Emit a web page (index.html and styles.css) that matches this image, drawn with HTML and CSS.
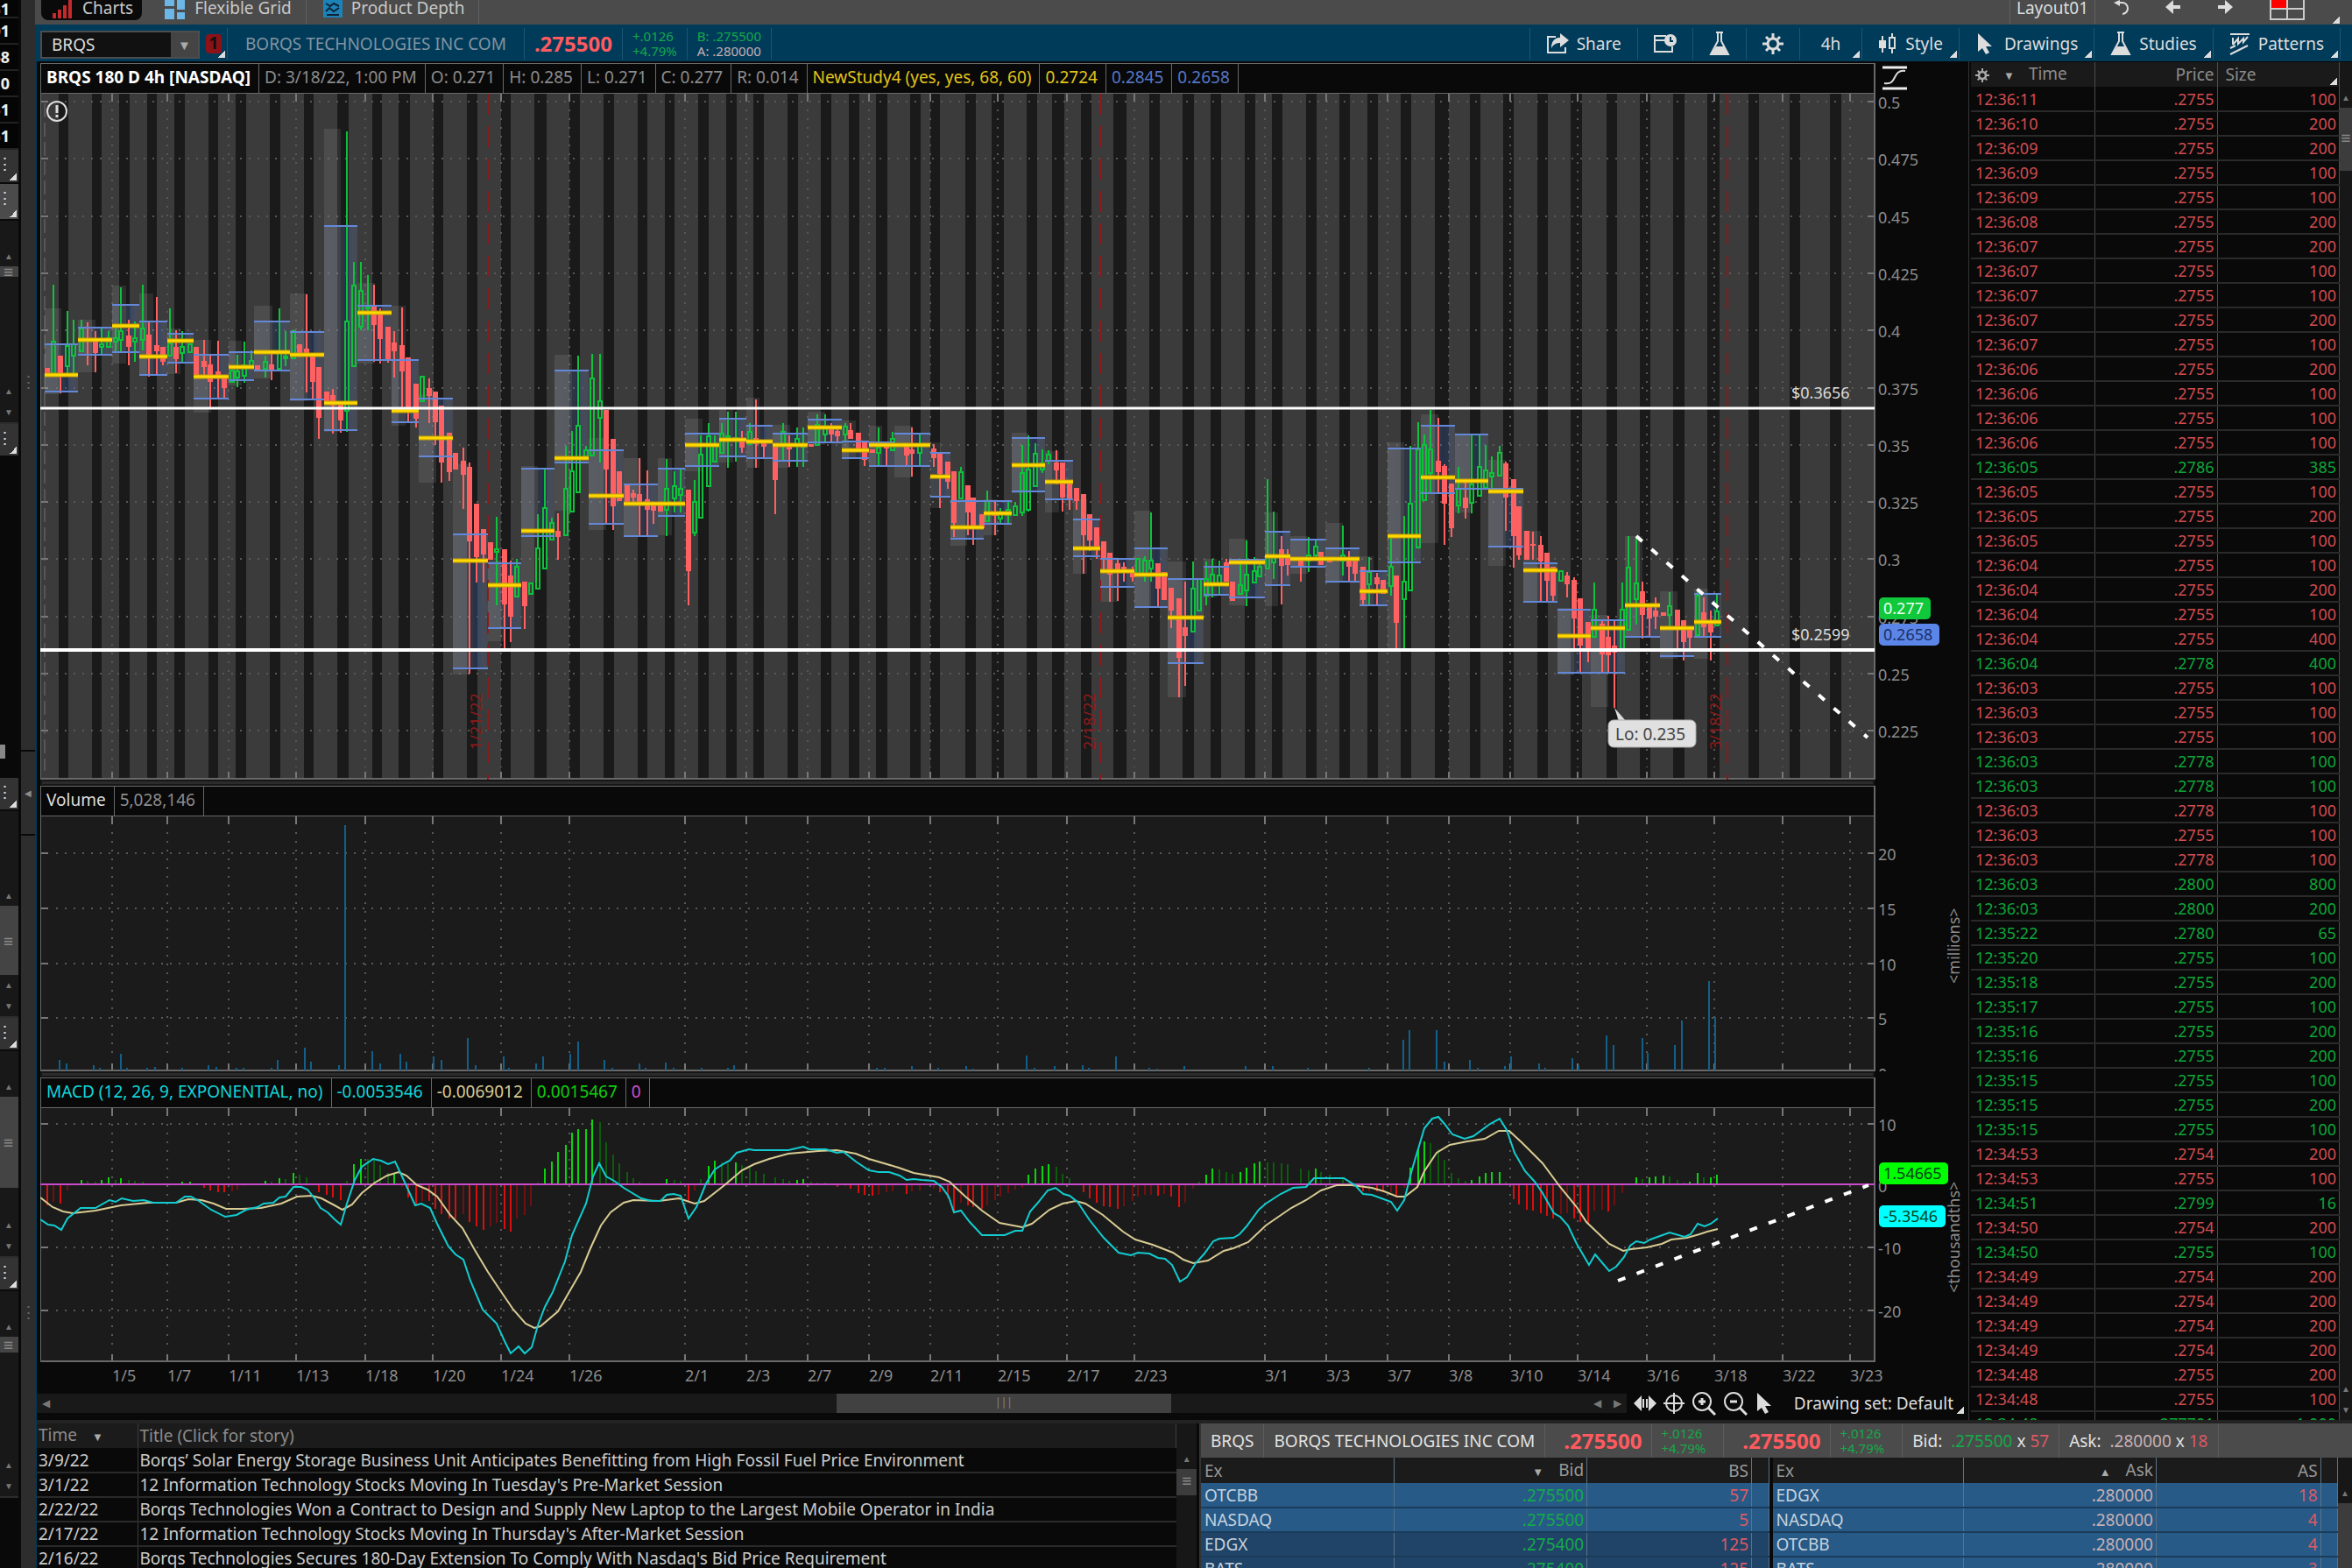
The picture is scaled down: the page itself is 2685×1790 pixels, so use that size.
FILE: index.html
```html
<!DOCTYPE html>
<html lang="en">
  <head>
    <meta charset="UTF-8" />
    <meta name="viewport" content="width=device-width, initial-scale=1.0" />
    <title>BRQS Charts</title>
    <link rel="stylesheet" href="styles.css">
  </head>

  <body>
    <div class="app">
      <div class="rail">
        <div class="cell">31</div>
        <div class="cell">01</div>
        <div class="cell">68</div>
        <div class="cell">0</div>
        <div class="cell">51</div>
        <div class="cell">51</div>
        <div class="tab corner">⋮</div>
        <div class="tab light corner">⋮</div>
        <div class="up">▲</div>
        <div class="thumb">≡</div>
        <div class="updown"><span>▲</span><span>▼</span></div>
        <div class="tab corner">⋮</div>
        <div class="dark"><i class="knob"></i></div>
        <div class="tab corner">⋮</div>
        <div class="up">▲</div>
        <div class="thumb">≡</div>
        <div class="updown"><span>▲</span><span>▼</span></div>
        <div class="tab corner">⋮</div>
        <div class="up">▲</div>
        <div class="thumb">≡</div>
        <div class="updown"><span>▲</span><span>▼</span></div>
        <div class="tab corner">⋮</div>
        <div class="up">▲</div>
        <div class="thumb">≡</div>
        <div class="updown"><span>▲</span><span>▼</span></div>
        <div class="dark"></div>
      </div>
      <div class="splitter">
        <div class="grip">⋮</div>
        <button class="collapse" aria-label="Collapse">◀</button>
        <div class="grip">⋮</div>
      </div>

      <div class="main">
        <nav class="tabs">
          <a href="#" class="active">
            <svg width="24" height="22" viewBox="0 0 24 22" fill="#c4292c"><path d="M0 15h4v6H0zM6 11h4v10H6zM12 6h4v15h-4zM18 0h4v21h-4z"/></svg>
            Charts
          </a>
          <a href="#">
            <svg width="24" height="22" viewBox="0 0 24 22" fill="#6db7e6"><path d="M0 0h11v7H0zM0 10h11v12H0zM14 0h9v11h-9zM14 14h9v8h-9z"/></svg>
            Flexible Grid
          </a>
          <a href="#">
            <svg width="22" height="22" viewBox="0 0 22 22"><path fill="#1c83b8" d="M0 0h22v20H0z"/><path d="M3 4l5 3 4-3 6 3M3 13l4-4 5 4 6-4M4 17h14" fill="none" stroke="#123" stroke-width="2"/></svg>
            Product Depth
          </a>
          <div class="layout">
            <button class="name">Layout01</button>
            <button aria-label="Undo"><svg width="20" height="20" viewBox="0 0 20 20"><path d="M5 3h5a6 6 0 0 1 1 13" fill="none" stroke="#ddd" stroke-width="2"/><path d="M8 0v7L1 3z" fill="#ddd"/></svg></button>
            <button aria-label="Back"><svg width="18" height="16" viewBox="0 0 18 16"><path d="M9 0v6h8v4H9v6L0 8z" fill="#ddd"/></svg></button>
            <button aria-label="Forward"><svg width="18" height="16" viewBox="0 0 18 16"><path d="M9 0v6H1v4h8v6l9-8z" fill="#ddd"/></svg></button>
            <button class="grids corner" aria-label="Grid"><svg width="40" height="24" viewBox="0 0 40 24"><path fill="#f00" d="M0 0h20v10H0z"/><path d="M1 0v22h38V0M20 0v22M1 10h38" fill="none" stroke="#ccc" stroke-width="2"/></svg></button>
          </div>
        </nav>

        <div class="toolbar">
          <div class="symbol">
            <input type="text" value="BRQS" aria-label="Symbol" />
            <button aria-label="Symbols">▼</button>
          </div>
          <button class="link corner" aria-label="Link"><b>1</b></button>
          <div class="company">BORQS TECHNOLOGIES INC COM</div>
          <div class="last">.275500</div>
          <div class="change">+.0126<br />+4.79%</div>
          <div class="change">B: .275500<br /><span class="ask">A: .280000</span></div>
          <div class="actions">
            <button><svg width="26" height="24" viewBox="0 0 26 24"><path d="M11 4H2v18h20v-6" fill="none" stroke="#ddd" stroke-width="2"/><path d="M16 0v5C9 5 6 10 6 17c2-4 5-6 10-6v5l10-8z" fill="#ddd"/></svg>Share</button>
            <button aria-label="Events"><svg width="26" height="24" viewBox="0 0 26 24"><path d="M14 3H1v18h20v-6M1 8h13" fill="none" stroke="#ddd" stroke-width="2"/><circle cx="19" cy="8" r="7" fill="#ddd"/><path d="M19 4v5h3" stroke="#003b5a" fill="none" stroke-width="2"/></svg></button>
            <button aria-label="Lab"><svg width="24" height="28" viewBox="0 0 24 28"><path d="M8 1h8M10 1v10L2 26h20L14 11V1" fill="none" stroke="#ddd" stroke-width="2"/><path d="M8 17h9l5 9H2z" fill="#ddd"/></svg></button>
            <button aria-label="Settings"><svg width="24" height="24" viewBox="0 0 24 24"><circle cx="12" cy="12" r="6" fill="none" stroke="#ddd" stroke-width="3"/><path d="M12 0v5M12 19v5M0 12h5M19 12h5M4 4l3 3M17 17l3 3M20 4l-3 3M7 17l-3 3" stroke="#ddd" stroke-width="3"/></svg></button>
            <button class="corner period">4h</button>
            <button class="corner"><svg width="22" height="24" viewBox="0 0 22 24"><path d="M5 3v19M16 0v5M16 17v6" stroke="#ddd" stroke-width="2"/><path fill="#ddd" d="M1 8h8v9H1z"/><path d="M13 5h6v12h-6z" fill="none" stroke="#ddd" stroke-width="2"/></svg>Style</button>
            <button class="corner"><svg width="24" height="24" viewBox="0 0 24 24"><path d="M3 0v21l5-4 4 7 4-2-4-7h7z" fill="#ddd"/></svg>Drawings</button>
            <button class="corner"><svg width="24" height="28" viewBox="0 0 24 28"><path d="M8 1h8M10 1v10L2 26h20L14 11V1" fill="none" stroke="#ddd" stroke-width="2"/><path d="M8 17h9l5 9H2z" fill="#ddd"/></svg>Studies</button>
            <button class="corner last-action"><svg width="24" height="26" viewBox="0 0 24 26"><path d="M1 2h22M4 14V6M4 14l6-7v6l6-6v4l5-6M1 25l20-10M1 18l6-3" fill="none" stroke="#ddd" stroke-width="2"/></svg>Patterns</button>
          </div>
        </div>

        <div class="work">
          <div class="charts">
            <div class="study">
              <span class="title">BRQS 180 D 4h [NASDAQ]</span>
              <span>D: 3/18/22, 1:00 PM</span>
              <span>O: 0.271</span>
              <span>H: 0.285</span>
              <span>L: 0.271</span>
              <span>C: 0.277</span>
              <span>R: 0.014</span>
              <span class="yellow">NewStudy4 (yes, yes, 68, 60)</span>
              <span class="yellow">0.2724</span>
              <span class="blue">0.2845</span>
              <span class="blue">0.2658</span>
              <svg class="fit" width="28" height="30" viewBox="0 0 28 30"><path d="M0 4h28M0 28h28" stroke="#eee" stroke-width="3"/><path d="M2 22c16 3 8-16 24-14" fill="none" stroke="#ddd" stroke-width="2"/></svg>
            </div>
            <svg id="price" class="chart" viewBox="46 107 2201 783"></svg>
            <div class="divider"></div>
            <div class="study">
              <span class="white">Volume</span>
              <span>5,028,146</span>
            </div>
            <svg id="volume" class="chart" viewBox="46 932 2201 291"></svg>
            <div class="divider"></div>
            <div class="study">
              <span class="cyan">MACD (12, 26, 9, EXPONENTIAL, no)</span>
              <span class="cyan">-0.0053546</span>
              <span class="tan">-0.0069012</span>
              <span class="green">0.0015467</span>
              <span class="magenta">0</span>
            </div>
            <svg id="macd" class="chart" viewBox="46 1265 2201 325"></svg>
            <div class="bottom-bar">
              <div class="scroll">
                <span>◀</span>
                <div class="track"><div class="handle">|||</div></div>
                <span>◀</span><span>▶</span>
              </div>
              <button aria-label="Expand"><svg width="26" height="20" viewBox="0 0 26 20"><path d="M9 1v18L0 10zM17 1v18l9-9z" fill="#ddd"/><path d="M11 5v10M15 5v10" stroke="#ddd" stroke-width="2"/></svg></button>
              <button aria-label="Crosshair"><svg width="24" height="24" viewBox="0 0 24 24"><circle cx="12" cy="12" r="9" fill="none" stroke="#ddd" stroke-width="2"/><path d="M12 0v24M0 12h24" stroke="#ddd" stroke-width="2"/></svg></button>
              <button aria-label="Zoom in"><svg width="28" height="28" viewBox="0 0 28 28"><circle cx="12" cy="12" r="10" fill="none" stroke="#ddd" stroke-width="2"/><path d="M19 19l8 8M12 8v8M8 12h8" stroke="#ddd" stroke-width="3"/></svg></button>
              <button aria-label="Zoom out"><svg width="28" height="28" viewBox="0 0 28 28"><circle cx="12" cy="12" r="10" fill="none" stroke="#ddd" stroke-width="2"/><path d="M19 19l8 8M8 12h8" stroke="#ddd" stroke-width="3"/></svg></button>
              <button aria-label="Pointer"><svg width="24" height="24" viewBox="0 0 24 24"><path d="M3 0v21l5-4 4 7 4-2-4-7h7z" fill="#ddd"/></svg></button>
              <button class="set corner">Drawing set: Default</button>
            </div>
          </div>

          <div class="sales">
            <table>
              <colgroup><col class="c1" /><col class="c2" /><col class="c3" /></colgroup>
              <thead>
                <tr>
                  <th class="l"><svg width="16" height="16" viewBox="0 0 24 24"><circle cx="12" cy="12" r="6" fill="none" stroke="#aaa" stroke-width="4"/><path d="M12 0v5M12 19v5M0 12h5M19 12h5M4 4l3 3M17 17l3 3M20 4l-3 3M7 17l-3 3" stroke="#aaa" stroke-width="3"/></svg><i class="sort">▼</i>Time</th>
                  <th>Price</th>
                  <th class="l corner">Size</th>
                </tr>
              </thead>
              <tbody id="trades"></tbody>
            </table>
            <div class="vscroll">
              <span>▲</span>
              <div class="vthumb">≡</div>
              <span class="push">▲</span><span>▼</span>
            </div>
          </div>
        </div>

        <div class="lower">
          <div class="news">
            <table>
              <colgroup><col class="date" /><col /></colgroup>
              <thead>
                <tr><th>Time <i class="sort">▼</i></th><th>Title (Click for story)</th></tr>
              </thead>
              <tbody>
                <tr><td>3/9/22</td><td>Borqs’ Solar Energy Storage Business Unit Anticipates Benefitting from High Fossil Fuel Price Environment</td></tr>
                <tr><td>3/1/22</td><td>12 Information Technology Stocks Moving In Tuesday's Pre-Market Session</td></tr>
                <tr><td>2/22/22</td><td>Borqs Technologies Won a Contract to Design and Supply New Laptop to the Largest Mobile Operator in India</td></tr>
                <tr><td>2/17/22</td><td>12 Information Technology Stocks Moving In Thursday's After-Market Session</td></tr>
                <tr><td>2/16/22</td><td>Borqs Technologies Secures 180-Day Extension To Comply With Nasdaq's Bid Price Requirement</td></tr>
              </tbody>
            </table>
            <div class="vscroll">
              <span>▲</span>
              <div class="vthumb short">≡</div>
            </div>
          </div>

          <div class="depth">
            <div class="quote">
              <div>BRQS</div>
              <div>BORQS TECHNOLOGIES INC COM</div>
              <div class="last">.275500</div>
              <div class="change">+.0126<br />+4.79%</div>
              <div class="last">.275500</div>
              <div class="change">+.0126<br />+4.79%</div>
              <div>Bid: &nbsp;<span class="bid">.275500</span> x <span class="red">57</span></div>
              <div>Ask: &nbsp;<span class="ask">.280000</span> x <span class="red">18</span></div>
            </div>
            <div class="books">
              <table class="book">
                <colgroup><col class="ex" /><col class="px" /><col class="sz" /><col /></colgroup>
                <thead><tr><th class="l">Ex</th><th><i class="sort">▼</i> Bid</th><th>BS</th><th></th></tr></thead>
                <tbody>
                  <tr><td class="l">OTCBB</td><td class="bid">.275500</td><td class="red">57</td><td></td></tr>
                  <tr><td class="l">NASDAQ</td><td class="bid">.275500</td><td class="red">5</td><td></td></tr>
                  <tr class="deep"><td class="l">EDGX</td><td class="bid">.275400</td><td class="red">125</td><td></td></tr>
                  <tr class="deep"><td class="l">BATS</td><td class="bid">.275400</td><td class="red">125</td><td></td></tr>
                </tbody>
              </table>
              <table class="book">
                <colgroup><col class="ex" /><col class="px" /><col class="sz" /><col /></colgroup>
                <thead><tr><th class="l">Ex</th><th><i class="sort">▲</i> Ask</th><th>AS</th><th></th></tr></thead>
                <tbody>
                  <tr><td class="l">EDGX</td><td class="ask">.280000</td><td class="red">18</td><td></td></tr>
                  <tr><td class="l">NASDAQ</td><td class="ask">.280000</td><td class="red">4</td><td></td></tr>
                  <tr><td class="l">OTCBB</td><td class="ask">.280000</td><td class="red">4</td><td></td></tr>
                  <tr><td class="l">BATS</td><td class="ask">.280000</td><td class="red">3</td><td></td></tr>
                </tbody>
              </table>
              <div class="vscroll">
                <span>▲</span>
                <div class="vthumb long"></div>
              </div>
            </div>
          </div>
        </div>
      </div>
    </div>
    <script src="script.js"></script>
  </body>
</html>
```

FILE: styles.css
```css
* {
  box-sizing: border-box;
}

body {
  margin: 0;
  height: 100vh;
  overflow: hidden;
  background-color: #090909;
  color: #8c8c8c;
  font-family: "Noto Sans", "Open Sans", sans-serif;
  font-size: 19px;
  line-height: 24px;
}

button,
input {
  font: inherit;
  color: inherit;
  background: none;
  border: 0;
  padding: 0;
  margin: 0;
}

a {
  color: inherit;
  text-decoration: none;
}

table {
  border-collapse: collapse;
  table-layout: fixed;
  width: 100%;
}

th,
td {
  padding: 0;
  font-weight: normal;
  white-space: nowrap;
  overflow: hidden;
}

.app {
  display: grid;
  grid-template-columns: 23px 17px minmax(0, 1fr);
  grid-template-rows: 100vh;
  overflow: hidden;
}

/* small white triangle in the lower right of a menu button */
.corner {
  background-image: linear-gradient(135deg, transparent 50%, #ddd 50%);
  background-size: 8px 8px;
  background-repeat: no-repeat;
  background-position: right 2px bottom 2px;
}

/* left rail */
.rail {
  display: grid;
  grid-template-columns: 21px;
  grid-template-rows:
    21px repeat(5, 30px) 39px 42px 52px 12px 168px 38px 366px 38px 108px
    79px 49px 38px 52px 104px 80px 38px 52px 18px 166px 1fr;
  background-color: #181818;
  border-right: 2px solid #0a0a0a;
  color: #777;
  overflow: hidden;
}

.cell {
  display: flex;
  justify-content: flex-end;
  align-items: center;
  padding-right: 10px;
  background-color: #050505;
  border-bottom: 2px solid #222;
  color: #eee;
  font-weight: bold;
  font-size: 18px;
}

.rail .tab {
  background-color: #333;
  border-bottom: 2px solid #0a0a0a;
  color: #ddd;
  line-height: 32px;
  text-indent: -4px;
}

.rail .light {
  background-color: #4b4b4b;
}

.up,
.updown,
.vscroll span {
  font-size: 10px;
  color: #777;
}

.up {
  display: flex;
  align-items: flex-end;
  padding-left: 5px;
}

.updown {
  display: flex;
  flex-direction: column;
  justify-content: flex-end;
  padding-left: 5px;
  border-bottom: 2px solid #2c2c2c;
}

.thumb {
  display: flex;
  align-items: center;
  padding-left: 4px;
  background-color: #444;
  color: #888;
}

.dark {
  display: flex;
  align-items: flex-end;
  padding-bottom: 22px;
  background-color: #090909;
}

.knob {
  width: 6px;
  height: 16px;
  background-color: #888;
}

.splitter {
  display: flex;
  flex-direction: column;
  justify-content: space-between;
  align-items: center;
  padding: 424px 0 280px;
  background-color: #2d2d2d;
  border-left: 1px solid #090909;
}

.grip {
  color: #666;
}

.collapse {
  width: 100%;
  height: 98px;
  margin-bottom: 124px;
  border-top: 2px solid #090909;
  border-bottom: 2px solid #090909;
  font-size: 10px;
}

.main {
  display: flex;
  flex-direction: column;
  border-left: 2px solid #003b5a;
}

/* tabs on top */
.tabs {
  display: flex;
  align-items: flex-start;
  flex: none;
  height: 28px;
  margin-left: -2px;
  padding-left: 7px;
  background-color: #4b4b4b;
  color: #c8c8c8;
  line-height: 19px;
}

.tabs a {
  display: flex;
  gap: 10px;
  height: 28px;
  padding: 0 16px 0 19px;
  border-right: 1px solid #606060;
}

.tabs .active {
  height: 23px;
  margin-right: 7px;
  padding: 0 10px 0 13px;
  background-color: #0a0a0a;
  border: 0;
  border-radius: 0 0 8px 8px;
}

.layout {
  display: flex;
  margin-left: auto;
  height: 28px;
}

.layout button {
  display: flex;
  width: 59px;
  justify-content: center;
}

.layout .name {
  width: 98px;
  border-left: 1px solid #606060;
  border-right: 1px solid #606060;
  color: #ddd;
}

.layout .grids {
  width: 116px;
  padding-right: 32px;
  background-position: right 14px bottom 1px;
}

/* blue toolbar */
.toolbar {
  display: flex;
  align-items: stretch;
  flex: none;
  height: 42px;
  margin-left: -2px;
  padding: 4px 13px 2px 6px;
  background-color: #003b5a;
}

.symbol {
  display: flex;
  width: 182px;
  height: 32px;
  margin-top: 3px;
  background-color: #111;
  border: 2px solid #4d4d4d;
}

.symbol input {
  width: 147px;
  padding-left: 11px;
  color: #ddd;
}

.symbol button {
  width: 31px;
  background-color: #444;
  color: #aaa;
  font-size: 15px;
}

.link {
  width: 32px;
  padding-left: 7px;
  border-right: 1px solid #1c5674;
  text-align: left;
  line-height: 20px;
}

.link b {
  display: block;
  width: 18px;
  height: 22px;
  background-color: #8d1218;
  border-radius: 4px;
  color: #111;
  text-align: center;
}

.company,
.toolbar .last,
.toolbar .change {
  display: flex;
  align-items: center;
  border-right: 1px solid #1c5674;
}

.company {
  padding: 0 20px;
  color: #8294a0;
}

.last {
  padding: 0 11px;
  color: #ff5a5f;
  font-size: 24px;
  font-weight: bold;
}

.toolbar .change,
.quote div.change {
  display: block;
  padding: 1px 11px;
  color: #16a84a;
  font-size: 15px;
  line-height: 17px;
}

.ask {
  color: #c7b0b4;
}

.actions {
  display: flex;
  margin-left: auto;
  color: #ddd;
}

.actions button {
  display: flex;
  align-items: center;
  gap: 9px;
  padding: 0 18px;
  border-left: 1px solid #1c5674;
}

.actions .period {
  padding: 0 24px;
}

.actions .last-action {
  border-right: 1px solid #1c5674;
}

/* charts and time and sales */
.work {
  display: grid;
  grid-template-columns: minmax(0, 1fr) 438px;
  flex: none;
  border-bottom: 4px solid #232323;
}

.charts {
  padding: 2px 0 0 4px;
}

.study {
  display: flex;
  position: relative;
  height: 35px;
  margin-right: 106px;
  background-color: #090909;
  border: 1px solid #686868;
  border-right-width: 2px;
  line-height: 31px;
}

.study span {
  padding: 0 9px 0 6px;
  border-right: 1px solid #686868;
}

.study .title {
  color: #fff;
  font-weight: bold;
}

.white {
  color: #ddd;
}

.yellow {
  color: #e2c41a;
}

.blue {
  color: #5577c6;
}

.cyan {
  color: #12d6da;
}

.tan {
  color: #d8cb93;
}

.green {
  color: #10cf10;
}

.magenta {
  color: #cf4fd0;
}

.fit {
  position: absolute;
  left: 100%;
  margin-left: 10px;
}

.chart {
  display: block;
  width: 100%;
  height: auto;
}

.chart text {
  fill: #8c8c8c;
  font-size: 18px;
}

.chart .note {
  fill: #ddd;
}

.chart .expiry {
  fill: #8d1a1a;
}

.chart .on-green {
  fill: #f0fff0;
}

.chart .on-blue {
  fill: #1b2f66;
}

.chart .on-bright {
  fill: #06401c;
}

.chart .callout {
  fill: #444;
  font-size: 19px;
}

.divider {
  height: 7px;
  margin-right: 107px;
  background-color: #2b2b2b;
  border: 2px solid #161616;
}

.bottom-bar {
  display: flex;
  align-items: center;
  gap: 8px;
  height: 31px;
  margin-left: -4px;
  padding-bottom: 7px;
}

.bottom-bar button {
  display: flex;
  height: 28px;
  align-items: center;
}

.scroll {
  display: flex;
  flex: 1;
  align-items: center;
  gap: 14px;
  height: 22px;
  padding: 0 6px;
  background-color: #191919;
  color: #777;
  font-size: 12px;
}

.track {
  flex: 1;
}

.handle {
  width: 22%;
  height: 22px;
  margin-left: 51%;
  background-color: #414141;
  color: #888;
  text-align: center;
  line-height: 20px;
}

.bottom-bar .set {
  margin-left: 13px;
  padding-right: 14px;
  margin-right: 3px;
  color: #ddd;
}

/* the list is cut off at the height of the charts */
.sales {
  display: flex;
  contain: size;
  overflow: hidden;
  padding: 1px 0 0 2px;
  border-left: 1px solid #333;
}

.sales table {
  width: 421px;
  height: 1px;
}

.sales .c1 {
  width: 141px;
}

.sales .c2 {
  width: 140px;
}

.sales tr,
.news tr {
  height: 28px;
}

.sales th,
.sales td {
  height: 28px;
  padding: 0 3px 0 5px;
  border-right: 1px solid #4c4c4c;
  text-align: right;
}

.sales td {
  border-bottom: 2px solid #2a2a2a;
  font-size: 18px;
}

.sales th {
  background-color: #1a1a1a;
}

.sales td.l,
.sales th.l {
  text-align: left;
}

.sales th svg {
  vertical-align: middle;
}

.sales th.corner {
  padding-left: 9px;
}

.sort {
  font-size: 13px;
  font-style: normal;
  color: #aaa;
  margin: 0 12px;
}

.sales .sort {
  margin: 0 16px;
}

.down td {
  color: #d24c50;
}

.rise td {
  color: #0da638;
}

.vscroll {
  display: flex;
  flex-direction: column;
  align-items: center;
  width: 23px;
  padding-top: 28px;
  background-color: #171717;
  overflow: hidden;
}

.sales .vscroll {
  width: 14px;
  margin-left: auto;
}

.vthumb {
  flex: none;
  width: 100%;
  height: 72px;
  background-color: #3c3c3c;
  color: #888;
  text-align: center;
  line-height: 68px;
}

.vthumb.short {
  height: 30px;
  line-height: 26px;
}

.vthumb.long {
  height: 200px;
}

.push {
  margin-top: auto;
}

/* news and market depth */
.lower {
  display: grid;
  grid-template-columns: minmax(0, 1327px) minmax(0, 1fr);
  flex: 1;
  min-height: 0;
  overflow: hidden;
}

.news {
  display: flex;
  padding-right: 3px;
}

.news table {
  height: 1px;
}

.news .date {
  width: 115px;
}

.news th,
.news td {
  padding-left: 2px;
  text-align: left;
}

.news th {
  background-color: #1b1b1b;
  border-right: 1px solid #3c3c3c;
}

.news td {
  color: #ccc;
  border-bottom: 2px solid #2a2a2a;
}

.news td:first-child {
  border-right: 1px solid #3c3c3c;
}

.depth {
  border-left: 2px solid #333;
  overflow: hidden;
}

.quote {
  display: flex;
  height: 39px;
  background-color: #4b4b4b;
  color: #e2e2e2;
}

.quote div {
  display: flex;
  align-items: center;
  padding: 0 11px;
  border-right: 1px solid #5c5c5c;
  white-space: pre;
}

.quote div.last {
  padding-left: 21px;
  color: #ff5a5f;
}

.quote div.change {
  padding: 3px 20px 0 10px;
}

.bid {
  color: #16a84a;
}

.red {
  color: #dc5a66;
}

.books {
  display: flex;
  align-items: flex-start;
}

.book .ex {
  width: 34%;
}

.book .px {
  width: 34%;
}

.book .sz {
  width: 29%;
}

.book th {
  height: 29px;
  background-color: #1b1b1b;
  color: #999;
}

.book th,
.book td {
  padding: 0 3px 0 4px;
  border-right: 1px solid #5a7388;
  text-align: right;
}

.book td {
  height: 28px;
  background-color: #275a87;
  border-bottom: 2px solid #1b3c5a;
}

.book .deep td {
  background-color: #204467;
}

.book td.l {
  color: #c6d2de;
}

.book .l {
  text-align: left;
}

.book + .book {
  border-left: 4px solid #090909;
}

.books .vscroll {
  width: 16px;
  flex: none;
}
```

FILE: script.js
```js
// every bar: x, high, body top, body bottom, low (g = up bar, r = down bar)
const bars = `
r54 420 420 428 428;g61 325 390 427 427;r69 406 406 428 449;g77 355 395 418 428;g84 365 393 406 427;
g93 365 375 401 401;r100 368 386 389 417;r109 378 390 403 425;g116 375 393 396 406;g124 378 386 396 396;
g132 375 386 390 402;g138 328 378 388 403;r147 365 383 396 417;g154 367 386 390 413;g163 325 375 388 400;
r170 368 382 408 430;r179 339 394 401 429;r186 396 396 413 417;g194 352 392 406 406;r201 377 396 410 426;
g208 378 396 403 415;g217 393 393 402 402;r224 396 396 428 428;r233 388 412 419 428;r240 406 416 436 467;
r249 389 424 432 454;r256 429 429 443 454;g265 423 423 436 436;g271 405 424 431 442;g279 390 417 429 437;
g287 400 412 420 420;r294 417 417 423 423;g303 406 413 421 431;r310 403 416 423 434;g319 352 403 421 421;
g326 378 407 409 418;g335 378 378 409 409;r342 393 393 403 403;r350 336 398 406 448;r357 403 403 436 456;
r364 419 419 477 501;r373 447 447 460 460;r380 444 451 463 495;r389 458 458 480 494;g396 150 367 469 493;
g404 299 326 418 418;g412 299 332 373 377;g420 314 350 352 377;r427 325 350 371 413;r434 352 358 387 415;
r443 373 373 410 414;r450 378 391 401 431;r459 351 394 424 465;r466 408 408 467 482;r475 438 438 478 488;
g482 430 430 458 458;r490 432 443 452 483;r497 447 447 482 508;r504 463 463 528 551;r513 494 494 539 549;
r520 517 517 536 536;r529 511 526 542 581;r536 528 533 618 769;r544 575 575 636 665;r552 604 604 633 665;
r560 619 619 639 639;g567 590 627 630 691;r576 627 627 690 742;r583 640 657 704 733;g590 638 647 681 681;
r599 664 664 692 718;g606 666 666 678 678;g614 587 626 672 672;g622 535 580 649 649;g630 591 597 616 616;
r637 586 606 613 639;g646 509 558 611 611;g653 492 538 584 584;g660 406 486 562 562;g669 509 514 521 521;
g676 404 432 520 520;g685 404 458 477 528;r692 468 468 536 598;r700 501 501 578 605;r707 538 538 572 572;
r716 553 553 575 575;r723 559 563 568 575;r730 523 564 576 612;r739 537 570 582 611;r746 577 577 583 598;
r754 576 576 584 584;g761 524 558 582 612;g770 538 555 569 585;g777 535 558 565 585;r786 559 559 652 691;
g793 548 573 608 612;g800 497 519 591 591;g809 483 498 555 555;g816 497 507 527 527;g824 483 495 517 517;
g831 470 498 500 534;g840 470 500 502 527;r847 492 502 511 517;g856 483 493 507 507;r863 456 500 507 534;
r872 505 505 510 522;r885 507 507 548 587;g894 483 493 507 527;r901 497 507 513 533;g910 488 501 509 533;
g917 488 508 510 533;r926 507 507 510 510;g933 473 485 508 508;g942 473 488 496 506;r949 483 489 496 506;
r956 487 492 498 506;g965 483 487 496 503;r971 483 491 501 501;r980 494 494 513 513;r987 503 505 525 532;
r996 513 513 517 517;g1003 488 511 517 533;r1012 509 510 512 533;g1019 493 501 514 514;r1035 510 510 520 532;
r1041 488 513 518 544;g1050 495 509 517 533;r1066 507 512 523 533;r1073 518 518 541 580;r1082 527 527 550 558;
r1089 538 538 597 613;g1097 533 539 569 569;r1105 554 554 585 611;r1111 568 568 600 622;r1121 587 587 603 603;
g1127 560 572 595 595;r1136 572 585 589 611;g1142 580 585 592 597;g1151 572 582 588 597;g1159 573 578 588 588;
g1167 508 540 585 589;g1174 497 536 582 584;g1182 506 518 555 555;g1190 513 529 536 540;g1197 514 519 526 530;
r1206 514 528 537 553;r1213 528 528 568 584;r1221 550 550 570 582;r1229 557 557 572 582;r1237 564 564 611 655;
r1244 587 587 617 629;r1252 602 602 627 638;r1260 618 618 639 651;r1267 631 631 656 687;r1276 638 643 653 686;
r1283 642 647 654 664;r1293 647 653 659 664;g1299 638 638 655 655;g1307 635 640 657 664;g1314 585 640 649 664;
r1322 643 643 672 693;r1329 653 653 685 685;r1337 671 671 697 717;r1346 683 683 751 796;r1353 664 716 726 783;
g1362 641 672 721 721;g1369 661 661 697 697;g1377 641 661 680 691;g1384 638 656 668 682;g1392 640 657 666 678;
r1400 638 642 664 664;r1407 664 664 686 686;g1416 642 668 678 678;g1423 617 656 674 692;g1432 636 652 665 665;
g1438 638 647 658 658;g1447 547 634 649 649;g1454 584 634 642 661;r1463 612 627 646 690;r1470 627 636 645 657;
r1485 638 638 647 664;g1494 613 634 640 653;g1502 617 624 634 640;r1508 630 630 645 645;r1518 636 636 642 642;
g1533 600 634 640 657;r1540 629 636 647 663;r1547 638 638 655 664;r1556 647 647 685 690;g1563 636 653 667 691;
r1572 654 659 667 691;r1579 662 662 678 678;g1588 614 647 669 680;r1594 657 657 711 742;g1603 589 664 684 742;
g1610 509 575 674 674;g1619 482 513 625 625;g1626 496 508 571 571;g1633 468 513 540 563;r1642 477 526 539 563;
r1649 530 532 575 622;r1657 552 552 603 613;g1665 533 558 577 586;r1673 550 568 580 592;g1680 496 553 574 586;
g1689 497 533 566 566;g1696 508 537 557 557;g1703 521 540 544 558;g1712 509 517 543 543;r1719 527 529 568 606;
r1728 547 547 612 648;r1734 578 578 634 639;r1743 606 606 639 639;r1750 607 621 623 639;r1759 612 622 641 687;
r1766 631 631 663 687;r1773 647 647 680 687;g1782 652 652 663 663;r1789 653 657 667 682;r1797 659 662 706 742;
r1804 683 683 737 767;r1813 710 710 742 756;g1820 665 696 727 727;r1829 708 712 747 769;r1836 703 727 748 769;
r1843 709 737 745 808;g1852 665 696 742 742;g1859 612 648 719 719;g1868 612 666 684 713;r1875 664 675 702 729;
r1883 689 689 706 727;r1890 682 697 704 718;r1899 699 699 703 703;g1906 676 692 702 716;r1915 696 696 717 742;
r1922 708 708 733 754;r1929 718 718 728 741;g1938 673 680 725 725;r1945 682 699 716 728;r1953 697 709 722 754;
g1960 678 698 714 714`;

// study per day: left, right, upper band, middle, lower band, day high, day low
const days = `
51 89 393 428 447 352 450;89 128 374 388 405 365 425;128 159 348 372 402 326 415;159 191 367 407 428 335 429;
191 221 381 389 414 375 427;221 261 405 430 455 388 471;261 290 402 419 434 389 440;290 331 367 402 423 349 432;
331 370 379 405 456 335 458;370 408 258 460 491 147 493;408 447 349 357 411 323 415;447 478 411 469 482 349 486;
478 517 455 500 521 450 551;517 557 610 640 763 530 770;557 595 643 668 717 640 732;595 633 535 606 612 532 665;
633 672 423 523 528 405 583;672 712 514 566 598 500 605;712 751 553 575 612 523 612;751 782 535 575 589 523 611;
782 821 495 508 532 478 538;821 852 478 502 521 468 528;852 882 486 504 523 454 534;882 922 495 508 526 485 534;
922 961 479 488 505 470 508;961 992 504 514 523 480 524;992 1021 505 508 532 486 533;1021 1062 495 508 532 486 545;
1062 1085 517 544 567 505 580;1085 1123 572 602 615 570 623;1123 1155 572 586 598 570 611;1155 1193 500 531 561 494 563;
1193 1225 526 550 570 515 585;1225 1256 593 626 635 570 655;1256 1295 638 652 670 636 687;1295 1333 626 656 693 583 694;
1333 1374 661 705 757 641 796;1374 1403 647 667 679 638 682;1403 1444 639 642 682 615 691;1444 1473 607 635 668 585 692;
1473 1513 616 638 647 612 655;1513 1552 626 638 664 597 665;1552 1584 652 675 691 635 691;1584 1622 512 612 642 505 740;
1622 1661 486 545 563 473 620;1661 1699 496 549 558 495 585;1699 1739 558 561 624 525 646;1739 1778 643 651 687 606 687;
1778 1816 696 726 768 694 770;1816 1855 708 717 768 702 807;1855 1895 690 691 727 612 728;1895 1934 716 717 749 675 752;
1934 1965 678 710 727 672 752`;

// after hours stripes: left right
const stripes = `67 78 105 116 136 148 168 179 199 211 238 249 269 281 308 320 347 358 385 398 425 436 455 468 495 506
533 545 572 583 610 624 650 662 689 701 728 739 759 770 797 809 829 841 860 872 899 911 937 949 969 981 1000 1013
1039 1051 1062 1073 1102 1114 1132 1146 1172 1184 1201 1215 1234 1246 1271 1286 1312 1324 1350 1363 1382 1394
1421 1433 1452 1464 1491 1503 1529 1541 1561 1573 1599 1611 1638 1654 1678 1690 1716 1728 1755 1767 1793 1806
1834 1846 1872 1884 1910 1923 1949 1963 1996 2008 2043 2055 2089 2102`;

const dates = [
  [128, "1/5"], [191, "1/7"], [261, "1/11"], [338, "1/13"], [417, "1/18"], [494, "1/20"], [572, "1/24"],
  [650, "1/26"], [782, "2/1"], [852, "2/3"], [922, "2/7"], [992, "2/9"], [1062, "2/11"], [1139, "2/15"],
  [1218, "2/17"], [1295, "2/23"], [1444, "3/1"], [1514, "3/3"], [1584, "3/7"], [1654, "3/8"], [1724, "3/10"],
  [1801, "3/14"], [1880, "3/16"], [1957, "3/18"], [2035, "3/22"], [2112, "3/23"],
];

const volumes = `68 1210 76 1214 107 1216 114 1219 138 1203 145 1219 168 1219 177 1218 208 1219 238 1216 247 1218 270 1219
278 1219 310 1219 317 1210 348 1196 355 1212 387 1216 394 942 425 1200 434 1214 457 1203 464 1212 495 1206 504 1210
534 1185 543 1216 575 1206 581 1219 612 1214 620 1206 651 1203 660 1189 690 1210 699 1219 730 1214 737 1219 760 1213
769 1219 801 1219 831 1219 838 1216 1001 1219 1010 1219 1041 1217 1071 1219 1103 1217 1111 1220 1172 1205 1181 1219
1204 1217 1236 1216 1243 1219 1274 1206 1312 1219 1321 1220 1352 1217 1422 1217 1453 1217 1493 1219 1563 1219 1602 1187
1609 1176 1640 1176 1649 1212 1678 1210 1687 1219 1718 1217 1725 1206 1757 1214 1764 1219 1795 1208 1802 1216 1834 1182
1842 1193 1875 1185 1881 1202 1912 1193 1920 1165 1951 1120 1958 1161`;

const macdLine = `46 1392 55 1398 62 1399 70 1404 77 1391 92 1379 109 1379 125 1370 132 1372 139 1368 152 1371 164 1370
175 1373 201 1373 211 1366 218 1366 227 1371 241 1381 257 1389 270 1387 281 1381 294 1378 301 1374 312 1373 319 1367
326 1366 335 1355 344 1355 351 1358 359 1368 366 1379 374 1384 382 1392 389 1398 396 1374 405 1347 413 1332 426 1323
435 1325 443 1329 451 1326 459 1343 474 1376 481 1374 491 1379 499 1397 512 1423 520 1432 529 1438 537 1462 551 1495
567 1511 576 1531 583 1545 592 1537 599 1545 607 1538 614 1513 622 1492 631 1475 645 1440 653 1410 669 1374 677 1343
684 1328 692 1343 701 1348 712 1356 732 1368 744 1371 754 1371 761 1364 769 1363 777 1365 786 1391 795 1378 806 1351
816 1335 827 1328 833 1325 841 1316 855 1312 861 1313 900 1313 917 1309 924 1312 943 1312 955 1316 963 1315 977 1326
992 1336 1003 1338 1015 1338 1027 1342 1035 1347 1043 1346 1052 1347 1066 1348 1075 1355 1083 1366 1089 1384 1097 1382
1107 1395 1121 1410 1147 1410 1159 1405 1167 1405 1176 1383 1184 1374 1196 1359 1205 1356 1214 1363 1221 1365 1230 1372
1244 1393 1260 1413 1277 1430 1291 1433 1299 1430 1312 1431 1322 1436 1330 1437 1338 1444 1347 1463 1355 1458 1365 1442
1375 1431 1385 1417 1392 1414 1408 1413 1415 1409 1423 1400 1437 1381 1445 1374 1462 1363 1476 1356 1491 1355 1500 1345
1534 1345 1547 1353 1556 1363 1566 1364 1577 1368 1588 1372 1595 1382 1603 1370 1612 1335 1626 1288 1635 1277 1642 1275
1649 1283 1658 1295 1672 1300 1682 1297 1701 1283 1712 1277 1720 1290 1729 1316 1741 1337 1752 1349 1761 1362 1774 1385
1781 1389 1790 1399 1800 1420 1814 1444 1821 1432 1837 1451 1845 1446 1854 1435 1861 1422 1868 1417 1877 1419 1884 1415
1895 1411 1906 1407 1923 1412 1930 1409 1938 1397 1946 1400 1953 1397 1961 1391`;

const signalLine = `46 1367 60 1378 72 1383 83 1385 109 1382 138 1376 169 1373 201 1373 215 1369 230 1370 244 1374 258 1380
276 1380 298 1379 321 1374 339 1366 356 1365 367 1368 382 1376 391 1381 402 1375 413 1362 428 1350 442 1342 455 1338
464 1342 476 1353 488 1358 499 1366 514 1387 528 1402 542 1427 557 1452 571 1473 586 1495 600 1511 610 1516 617 1514
637 1497 652 1471 663 1452 674 1425 686 1399 697 1384 712 1373 723 1370 752 1371 775 1368 793 1374 804 1371 827 1353
847 1336 861 1329 878 1323 900 1317 934 1314 955 1313 977 1317 992 1323 1026 1333 1043 1339 1072 1344 1084 1349
1101 1365 1121 1382 1141 1396 1167 1401 1178 1397 1198 1381 1213 1374 1228 1371 1239 1374 1259 1387 1282 1406 1296 1415
1316 1421 1339 1430 1351 1438 1362 1442 1379 1439 1397 1428 1408 1425 1425 1418 1445 1399 1474 1379 1491 1370 1508 1359
1526 1353 1543 1353 1566 1356 1580 1360 1595 1366 1604 1366 1618 1355 1626 1337 1640 1316 1655 1307 1675 1303 1695 1300
1711 1291 1723 1291 1738 1305 1761 1328 1781 1355 1800 1378 1811 1395 1837 1420 1853 1428 1862 1426 1880 1424 1897 1420
1908 1415 1926 1413 1940 1409 1949 1406 1961 1403`;

const LEFT = 46;
const RIGHT = 2140;

function nums(s) {
  return s.trim().split(/\s+/).map(Number);
}
function pairs(s) {
  const n = nums(s);
  const out = [];
  for (let i = 0; i < n.length; i += 2) out.push([n[i], n[i + 1]]);
  return out;
}
function rect(x, y, w, h, fill, more) {
  return `<rect x="${x}" y="${y}" width="${w}" height="${h}" fill="${fill}" ${more || ""}/>`;
}
function line(x1, y1, x2, y2, stroke, w, more) {
  return `<line x1="${x1}" y1="${y1}" x2="${x2}" y2="${y2}" stroke="${stroke}" stroke-width="${w}" ${more || ""}/>`;
}
function text(x, y, s, cls, more) {
  return `<text x="${x}" y="${y}" class="${cls || ""}" ${more || ""}>${s}</text>`;
}

function grid(top, bottom, levels) {
  let s = "";
  levels.forEach(([y, label]) => {
    s += line(LEFT + 18, y, RIGHT - 10, y, "#585858", 2, 'stroke-dasharray="2 8"');
    s += line(LEFT, y, LEFT + 9, y, "#777", 2) + line(RIGHT - 8, y, RIGHT, y, "#777", 2);
    s += text(RIGHT + 4, y + 8, label);
  });
  dates.forEach(([x]) => {
    s += line(x, top + 18, x, bottom - 14, "#585858", 2, 'stroke-dasharray="2 8"');
    s += line(x, top, x, top + 9, "#777", 2) + line(x, bottom - 9, x, bottom, "#777", 2);
  });
  return s + line(LEFT, top, LEFT, bottom, "#686868", 2) + line(RIGHT, top, RIGHT, bottom, "#686868", 2) +
    line(LEFT, bottom - 1, RIGHT + 1, bottom - 1, "#686868", 2);
}

function tag(x, y, w, fill, label, cls) {
  return rect(x, y, w, 25, fill, 'rx="5"') + text(x + 5, y + 19, label, cls);
}

function drawPrice() {
  let s = '<defs><linearGradient id="cloud" x1="0" x2="1" y1="0" y2="0"><stop offset="0" stop-color="#8c98b0" stop-opacity=".22"/>' +
    '<stop offset=".5" stop-color="#7f8fb0" stop-opacity=".22"/><stop offset=".65" stop-color="#2f4f8f" stop-opacity=".42"/>' +
    '<stop offset="1" stop-color="#8296c8" stop-opacity=".15"/></linearGradient></defs>';
  s += rect(LEFT, 107, RIGHT - LEFT, 783, "#3b3b3b");
  pairs(stripes).forEach(([a, b]) => (s += rect(a, 107, b - a, 783, "#1a1a1a")));
  const levels = [];
  for (let i = 0; i < 12; i++) {
    levels.push([Math.round(116 + i * 65.3), String(Number((0.5 - i * 0.025).toFixed(3)))]);
  }
  s += grid(107, 890, levels);
  s += line(51, 118, 51, 880, "#707070", 1, 'stroke-dasharray="16 6"');

  const list = days.trim().split(";").map(nums);
  list.forEach(([a, b, up, mid, low, hi, lo]) => {
    s += rect(a, hi, Math.round((b - a) * 0.5), lo - hi, "#fff", 'opacity=".09"');
    s += rect(a, up, b - a, low - up, "url(#cloud)");
  });
  [557, 1256, 1972].forEach((x) => (s += line(x, 107, x, 890, "#8d1a1a", 2, 'stroke-dasharray="24 13"')));
  s += text(0, 0, "1/21/22", "expiry", 'transform="translate(550 856) rotate(-90)"');
  s += text(0, 0, "2/18/22", "expiry", 'transform="translate(1250 856) rotate(-90)"');
  s += text(0, 0, "3/18/22", "expiry", 'transform="translate(1965 856) rotate(-90)"');

  bars.trim().split(";").forEach((bar) => {
    const up = bar.trim()[0] === "g";
    const [x, hi, a, b, lo] = nums(bar.trim().slice(1));
    const h = Math.max(b - a, 2);
    if (up) {
      s += line(x, hi, x, a, "#0ec23c", 2) + line(x, b, x, lo, "#0ec23c", 2);
      s += rect(x - 2, a, 4, h, "none", 'stroke="#0ec23c" stroke-width="2"');
    } else {
      s += line(x, hi, x, lo, "#ff6163", 2) + rect(x - 3, a, 6, h, "#ff6163");
    }
  });
  list.forEach(([a, b, up, mid, low]) => {
    s += line(a, up, b, up, "#6488d8", 2) + line(a, low, b, low, "#6488d8", 2);
    s += line(a, mid, b, mid, "#c79f00", 5) + line(a, mid, b, mid, "#ffd800", 3);
  });

  s += line(LEFT, 466, RIGHT, 466, "#fff", 3) + line(LEFT, 742, RIGHT, 742, "#fff", 4);
  s += text(2045, 455, "$0.3656", "note") + text(2045, 731, "$0.2599", "note");
  s += line(1868, 612, 2132, 842, "#fff", 4, 'stroke-dasharray="9 14"');
  s += '<path d="M1843 808l5 15h8z" fill="#ddd"/>' + rect(1836, 822, 100, 31, "#e0e0e0", 'rx="6" stroke="#aaa"');
  s += text(1844, 845, "Lo: 0.235", "callout");
  s += '<circle cx="65" cy="127" r="11" fill="none" stroke="#ddd" stroke-width="2"/>' + line(65, 120, 65, 129, "#ddd", 3) + line(65, 131, 65, 134, "#ddd", 3);
  s += tag(2145, 682, 59, "#0fc83c", "0.277", "on-green") + tag(2145, 712, 69, "#5b86e8", "0.2658", "on-blue");
  document.getElementById("price").innerHTML = s;
}

function drawVolume() {
  let s = rect(LEFT, 932, RIGHT - LEFT, 291, "#1b1b1b");
  s += grid(932, 1223, [[974, "20"], [1037, "15"], [1100, "10"], [1162, "5"]]);
  s += text(RIGHT + 4, 1233, "0");
  pairs(volumes).forEach(([x, y]) => (s += line(x, y, x, 1222, "#12608a", 2)));
  s += text(0, 0, "&lt;millions&gt;", "", 'transform="translate(2237 1123) rotate(-90)"');
  document.getElementById("volume").innerHTML = s;
}

// value of a line at x
function at(points, x) {
  for (let i = 1; i < points.length; i++) {
    if (points[i][0] >= x) {
      const [x1, y1] = points[i - 1];
      const [x2, y2] = points[i];
      return y1 + ((y2 - y1) * (x - x1)) / (x2 - x1);
    }
  }
  return points[points.length - 1][1];
}

function drawMacd() {
  const zero = 1352;
  const macd = pairs(macdLine);
  const signal = pairs(signalLine);
  let s = rect(LEFT, 1265, RIGHT - LEFT, 289, "#1b1b1b");
  s += grid(1265, 1555, [[1283, "10"], [1424, "-10"], [1496, "-20"]]);
  s += text(RIGHT + 4, 1361, "0");
  let before = 0;
  bars.trim().split(";").forEach((bar) => {
    const x = parseInt(bar.trim().slice(1), 10);
    const diff = at(signal, x) - at(macd, x);
    const growing = Math.abs(diff) >= Math.abs(before);
    const color = diff > 0 ? (growing ? "#0bd40b" : "#0b5c0b") : growing ? "#d90f0f" : "#701010";
    s += line(x, zero, x, Math.round(zero - diff), color, 2);
    before = diff;
  });
  s += line(LEFT, zero, RIGHT, zero, "#c94bcb", 2);
  s += `<polyline points="${signal.join(" ")}" fill="none" stroke="#d8cb93" stroke-width="2"/>`;
  s += `<polyline points="${macd.join(" ")}" fill="none" stroke="#12ccd0" stroke-width="2"/>`;
  s += line(1847, 1462, 2133, 1353, "#fff", 4, 'stroke-dasharray="9 14"');
  s += tag(2145, 1327, 79, "#0f0", "1.54665", "on-bright") + tag(2145, 1376, 76, "#0ff", "-5.3546", "on-bright");
  s += text(0, 0, "&lt;thousandths&gt;", "", 'transform="translate(2237 1476) rotate(-90)"');
  dates.forEach(([x, d]) => (s += text(x, 1577, d)));
  document.getElementById("macd").innerHTML = s;
}

// time, price, size, + for up rows
const trades = `36:11 2755 100;36:10 2755 200;36:09 2755 200;36:09 2755 100;36:09 2755 100;36:08 2755 200;36:07 2755 200;
36:07 2755 100;36:07 2755 100;36:07 2755 200;36:07 2755 100;36:06 2755 200;36:06 2755 100;36:06 2755 100;36:06 2755 100;
36:05 2786 385 +;36:05 2755 100;36:05 2755 200;36:05 2755 100;36:04 2755 100;36:04 2755 200;36:04 2755 100;
36:04 2755 400;36:04 2778 400 +;36:03 2755 100;36:03 2755 100;36:03 2755 100;36:03 2778 100 +;36:03 2778 100 +;
36:03 2778 100;36:03 2755 100;36:03 2778 100;36:03 2800 800 +;36:03 2800 200 +;35:22 2780 65 +;35:20 2755 100 +;
35:18 2755 200 +;35:17 2755 100 +;35:16 2755 200 +;35:16 2755 200 +;35:15 2755 100 +;35:15 2755 200 +;35:15 2755 100 +;
34:53 2754 200;34:53 2755 100;34:51 2799 16 +;34:50 2754 200;34:50 2755 100 +;34:49 2754 200;34:49 2754 200;
34:49 2754 200;34:49 2754 200;34:48 2755 200;34:48 2755 100;34:48 277701 1,000 +`;

function fillTrades() {
  document.getElementById("trades").innerHTML = trades
    .split(";")
    .map((row) => {
      const [time, price, size, up] = row.trim().split(" ");
      return `<tr class="${up ? "rise" : "down"}"><td class="l">12:${time}</td><td>.${price}</td><td>${size}</td></tr>`;
    })
    .join("");
}

drawPrice();
drawVolume();
drawMacd();
fillTrades();
```
